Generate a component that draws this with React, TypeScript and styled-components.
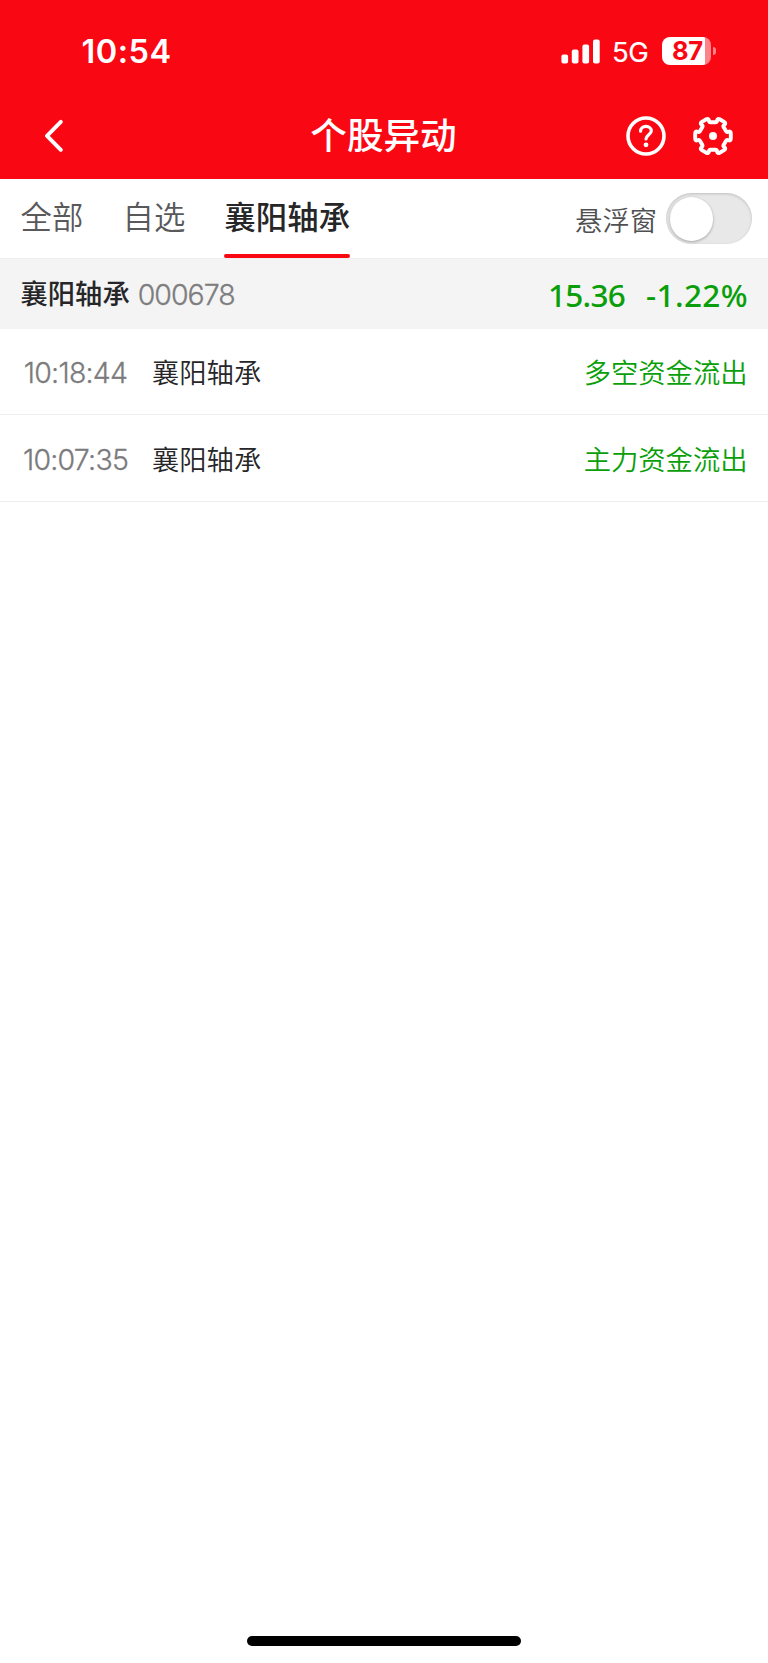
import React from 'react';
import styled, { createGlobalStyle } from 'styled-components';

const GlobalStyle = createGlobalStyle`
  * { box-sizing: border-box; }
  body {
    margin: 0;
    background: #fff;
    font-family: Inter, "Noto Sans CJK SC", sans-serif;
    color: #262628;
  }
`;

const Screen = styled.div`
  display: flex;
  flex-direction: column;
  width: 768px;
  height: 1663px;
  background: #fff;
  white-space: nowrap;
`;

const Header = styled.header`
  height: 179.4px;
  background: #fa0714;
  color: #fff;
`;

const StatusBar = styled.div`
  display: flex;
  align-items: center;
  justify-content: space-between;
  height: 102px;
  padding: 0 52.5px 0 81.5px;
`;

const Clock = styled.span`
  padding-top: 2px;
  font-size: 32.5px;
  font-weight: 600;
  line-height: 40px;
  letter-spacing: 0.5px;
`;

const StatusIcons = styled.div`
  display: flex;
  align-items: center;
`;

const Signal = styled.svg`
  display: block;
  margin-right: 12px;
`;

const Network = styled.span`
  width: 49.5px;
  padding-top: 2px;
  font-size: 27.5px;
  line-height: 40px;
  letter-spacing: -0.5px;
  -webkit-text-stroke: 0.2px currentColor;
`;

const Battery = styled.div`
  display: flex;
  align-items: center;
`;

const BatteryBody = styled.div`
  width: 49.5px;
  height: 27.5px;
  padding-left: 2px;
  border-radius: 8px;
  background: linear-gradient(to right, #fff 43px, #fd8389 43px);
  color: #fa0714;
  font-size: 25.5px;
  font-weight: 700;
  line-height: 28px;
  text-align: center;
  letter-spacing: -0.5px;
`;

const BatteryTip = styled.div`
  width: 3px;
  height: 8px;
  margin-left: 1.5px;
  border-radius: 0 4px 4px 0;
  background: #fd8389;
`;

const NavBar = styled.div`
  display: grid;
  grid-template-columns: 1fr auto 1fr;
  align-items: center;
  height: 68px;
  padding: 0 35px 0 43px;
`;

const Title = styled.h1`
  margin: 0 0 0 -9px;
  font-size: 36.6px;
  font-weight: 500;
  line-height: 52px;
`;

const Actions = styled.div`
  display: flex;
  justify-content: flex-end;
  gap: 27px;
`;

const Icon = styled.svg`
  display: block;
  fill: none;
  stroke: #fff;
  stroke-linecap: round;
  stroke-linejoin: round;
`;

const TabBar = styled.nav`
  display: flex;
  align-items: stretch;
  height: 78.6px;
  padding: 0 16px 0 20.5px;
`;

const Tab = styled.div<{ $active?: boolean }>`
  display: flex;
  flex-direction: column;
  justify-content: space-between;
  margin-right: 39.2px;
  color: ${(p) => (p.$active ? '#262628' : '#59595b')};
  font-size: 31.4px;
  font-weight: ${(p) => (p.$active ? 500 : 350)};
  line-height: 74px;

  &::after {
    content: '';
    height: 3.5px;
    border-radius: 2px;
    background: ${(p) => (p.$active ? '#fa0714' : 'transparent')};
  }
`;

const TabLabel = styled.span`
  height: 74px;
  padding-top: 2px;
`;

const FloatSetting = styled.div`
  display: flex;
  align-items: center;
  margin-left: auto;
  color: #505052;
  font-size: 27.3px;
  font-weight: 350;
  gap: 8.5px;
`;

const Switch = styled.div`
  width: 86.5px;
  height: 51px;
  padding: 4px;
  border-radius: 26px;
  background: #e8e8e8;
  box-shadow: inset 0 1px 3px rgba(0, 0, 0, 0.18);
`;

const Knob = styled.div`
  width: 43.5px;
  height: 43.5px;
  border-radius: 50%;
  background: #fff;
  box-shadow: 0 1px 3px rgba(0, 0, 0, 0.3);
`;

const QuoteBar = styled.div`
  display: flex;
  align-items: center;
  height: 70.7px;
  padding: 2px 20px 0 20.5px;
  background: #f4f4f4;
  border-top: 1px solid #efeff0;
  line-height: 68px;
`;

const QuoteName = styled.span`
  font-size: 27.3px;
  font-weight: 500;
`;

const QuoteCode = styled.span`
  flex: 1;
  margin-left: 8px;
  color: #7d7d7f;
  font-size: 28.5px;
  font-weight: 300;
  letter-spacing: -1px;
  -webkit-text-stroke: 0.3px currentColor;
`;

const Figure = styled.span<{ $tracking: number }>`
  margin-left: 21px;
  color: #0a9f0a;
  font-family: "Noto Sans", sans-serif;
  font-size: 31.5px;
  font-weight: 500;
  letter-spacing: ${(p) => p.$tracking}px;
`;

const AlertRow = styled.div`
  display: flex;
  align-items: center;
  height: 86.6px;
  padding: 0 20.5px 0 16px;
  border-bottom: 1px solid #ededee;
  font-size: 27.3px;
  font-weight: 350;
`;

const AlertTime = styled.span`
  width: 119px;
  margin-right: 17px;
  padding-top: 2px;
  color: #7b7b7d;
  font-size: 28.5px;
  font-weight: 300;
  letter-spacing: -0.75px;
  text-align: center;
  -webkit-text-stroke: 0.3px currentColor;
`;

const AlertEvent = styled.span`
  margin-left: auto;
  color: #0a9f0a;
`;

const HomeIndicator = styled.div`
  width: 273.5px;
  height: 10px;
  margin: auto auto 17px;
  border-radius: 5px;
  background: #000;
`;

const rotate = (x: number, y: number, degrees: number) => {
  const a = (degrees * Math.PI) / 180;
  return [20 + x * Math.cos(a) - y * Math.sin(a), 20 + x * Math.sin(a) + y * Math.cos(a)];
};

// Outline of a six-toothed cog with every corner rounded off.
const cogPath = () => {
  const corners = [0, 60, 120, 180, 240, 300].flatMap((angle) => [
    rotate(17.8, -5, angle),
    rotate(17.8, 5, angle),
    rotate(13.7, -3.7, angle + 30),
    rotate(13.7, 3.7, angle + 30),
  ]);
  const n = corners.length;
  const toward = (from: number[], to: number[], amount: number) => {
    const d = Math.hypot(to[0] - from[0], to[1] - from[1]);
    return [from[0] + ((to[0] - from[0]) * amount) / d, from[1] + ((to[1] - from[1]) * amount) / d];
  };
  return (
    corners
      .map((c, i) => {
        const r = i % 4 < 2 ? 2.4 : 1.2;
        const a = toward(c, corners[(i + n - 1) % n], r);
        const b = toward(c, corners[(i + 1) % n], r);
        return `${i ? 'L' : 'M'}${a.join(' ')} Q${c.join(' ')} ${b.join(' ')}`;
      })
      .join(' ') + ' Z'
  );
};

const tabs = ['全部', '自选', '襄阳轴承'];
const alerts = [
  { time: '10:18:44', name: '襄阳轴承', event: '多空资金流出' },
  { time: '10:07:35', name: '襄阳轴承', event: '主力资金流出' },
];

export default function App() {
  return (
    <Screen>
      <GlobalStyle />
      <Header>
        <StatusBar>
          <Clock>10:54</Clock>
          <StatusIcons>
            <Signal width="39" height="25" viewBox="0 0 39 25" fill="#fff">
              <rect x="0.4" y="15.5" width="6.7" height="9" rx="2" />
              <rect x="10.8" y="10.5" width="6.7" height="14" rx="2" />
              <rect x="21.4" y="5.5" width="6.7" height="19" rx="2" />
              <rect x="32" y="0.5" width="6.7" height="24" rx="2" />
            </Signal>
            <Network>5G</Network>
            <Battery>
              <BatteryBody>87</BatteryBody>
              <BatteryTip />
            </Battery>
          </StatusIcons>
        </StatusBar>
        <NavBar>
          <Icon width="20" height="34" viewBox="0 0 20 34" strokeWidth="3.9">
            <path d="M17.8 2.8 4 16.8l13.8 14" />
          </Icon>
          <Title>个股异动</Title>
          <Actions>
            <Icon width="40" height="40" viewBox="0 0 40 40" strokeWidth="3.6">
              <circle cx="20" cy="20" r="18" />
              <path strokeWidth="3.2" d="M14.6 15.2c0-3 2.4-4.9 5.4-4.9s5.3 2 5.3 4.7c0 3.4-5.3 4.3-5.3 8" />
              <circle cx="20" cy="28.8" r="2.4" fill="#fff" stroke="none" />
            </Icon>
            <Icon width="40" height="40" viewBox="0 0 40 40" strokeWidth="3.9">
              <path d={cogPath()} />
              <circle cx="20" cy="20" r="4" fill="#fff" stroke="none" />
            </Icon>
          </Actions>
        </NavBar>
      </Header>
      <TabBar>
        {tabs.map((name, i) => (
          <Tab key={name} $active={i === 2}>
            <TabLabel>{name}</TabLabel>
          </Tab>
        ))}
        <FloatSetting>
          悬浮窗
          <Switch>
            <Knob />
          </Switch>
        </FloatSetting>
      </TabBar>
      <QuoteBar>
        <QuoteName>襄阳轴承</QuoteName>
        <QuoteCode>000678</QuoteCode>
        <Figure $tracking={-0.7}>15.36</Figure>
        <Figure $tracking={0.4}>-1.22%</Figure>
      </QuoteBar>
      {alerts.map((a) => (
        <AlertRow key={a.time}>
          <AlertTime>{a.time}</AlertTime>
          <span>{a.name}</span>
          <AlertEvent>{a.event}</AlertEvent>
        </AlertRow>
      ))}
      <HomeIndicator />
    </Screen>
  );
}
